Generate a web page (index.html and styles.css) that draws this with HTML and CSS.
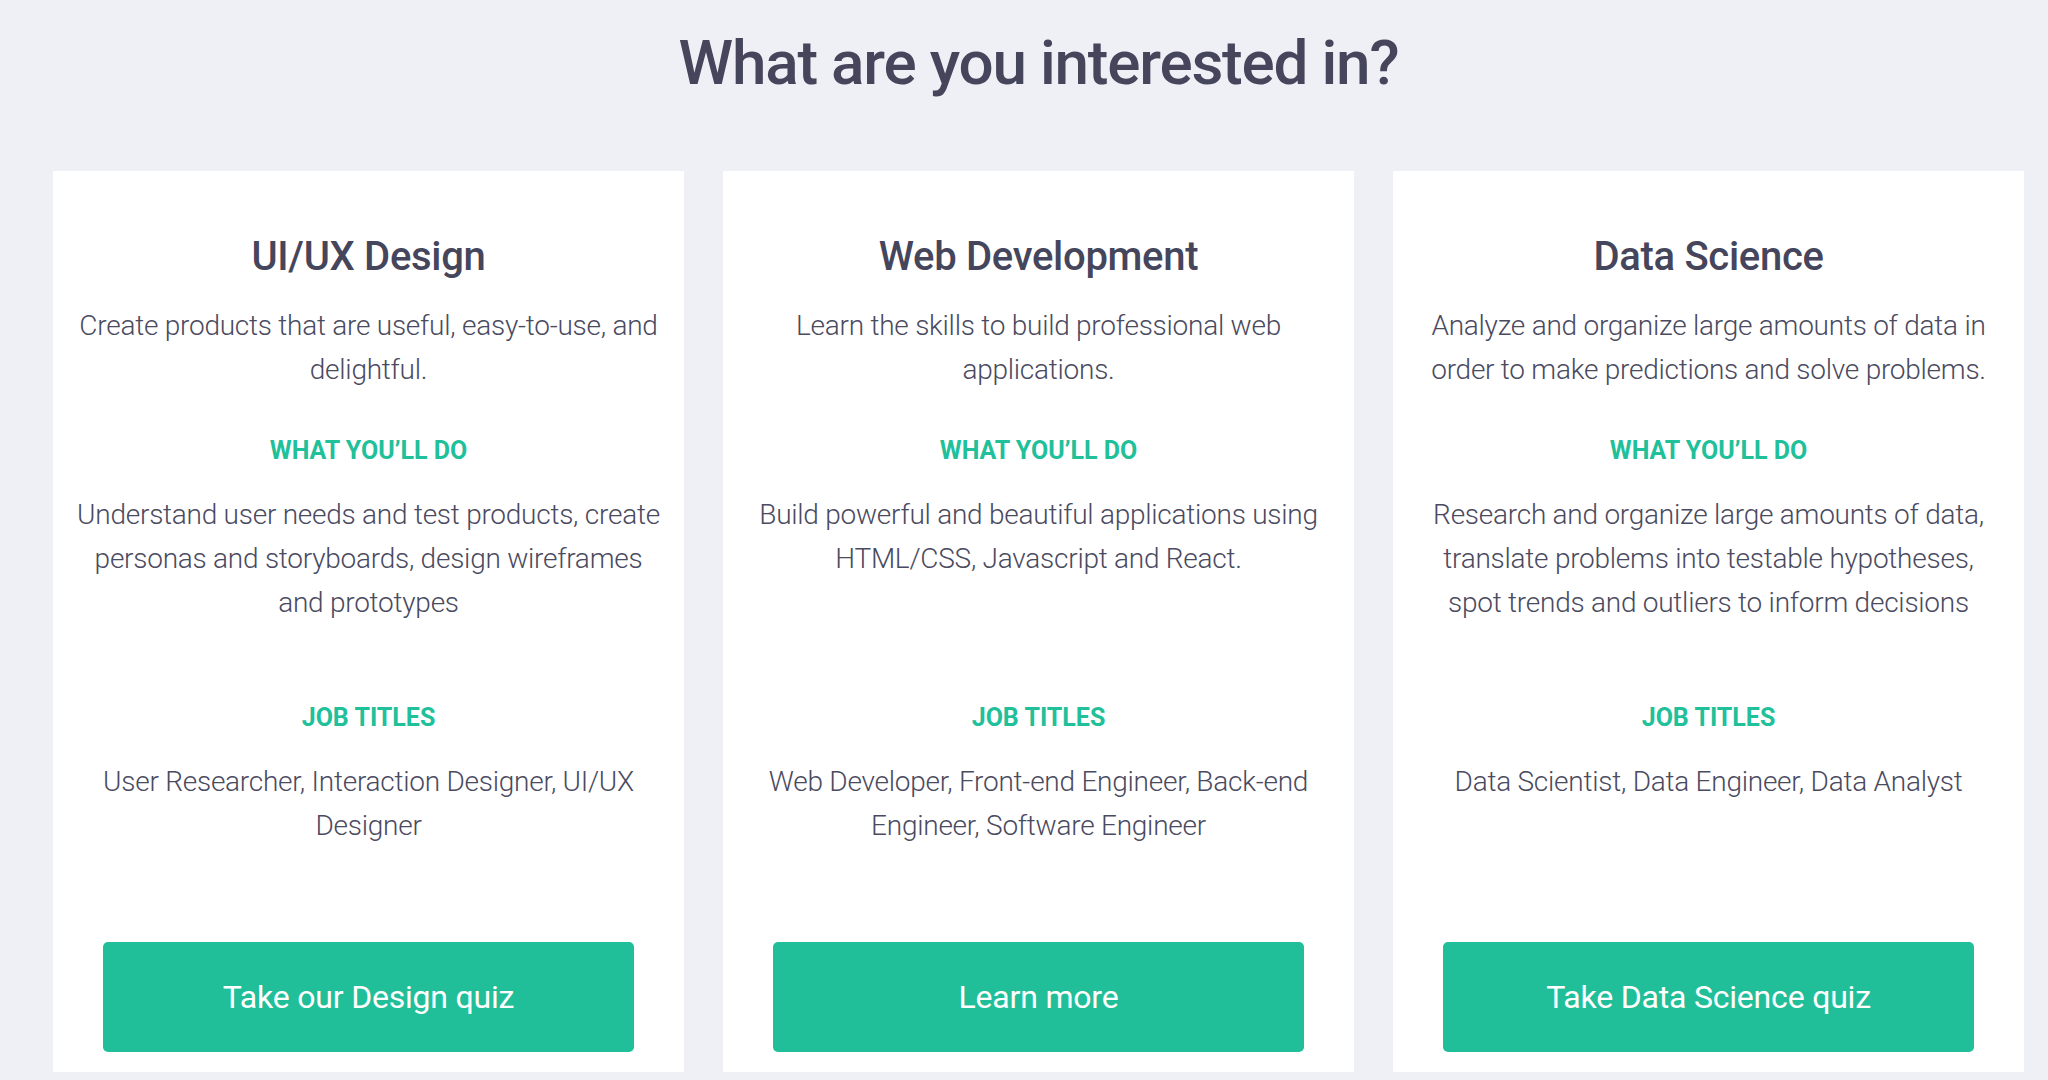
FILE: index.html
```html
<!DOCTYPE html>
<html lang="en">
<head>
<meta charset="utf-8">
<title>What are you interested in?</title>
<link rel="stylesheet" href="styles.css">
</head>
<body>
<main class="page">
  <h1 class="page-title">What are you interested in?</h1>
  <div class="cards">
    <section class="card">
      <h2 class="card-title">UI/UX Design</h2>
      <p class="desc">Create products that are useful, easy-to-use, and delightful.</p>
      <h3 class="label">WHAT YOU’LL DO</h3>
      <p class="body">Understand user needs and test products, create personas and storyboards, design wireframes and prototypes</p>
      <h3 class="label">JOB TITLES</h3>
      <p class="jobs">User Researcher, Interaction Designer, UI/UX Designer</p>
      <a class="btn" href="#">Take our Design quiz</a>
    </section>
    <section class="card">
      <h2 class="card-title">Web Development</h2>
      <p class="desc">Learn the skills to build professional web applications.</p>
      <h3 class="label">WHAT YOU’LL DO</h3>
      <p class="body">Build powerful and beautiful applications using HTML/CSS, Javascript and React.</p>
      <h3 class="label">JOB TITLES</h3>
      <p class="jobs">Web Developer, Front-end Engineer, Back-end Engineer, Software Engineer</p>
      <a class="btn" href="#">Learn more</a>
    </section>
    <section class="card">
      <h2 class="card-title">Data Science</h2>
      <p class="desc">Analyze and organize large amounts of data in order to make predictions and solve problems.</p>
      <h3 class="label">WHAT YOU’LL DO</h3>
      <p class="body">Research and organize large amounts of data, translate problems into testable hypotheses, spot trends and outliers to inform decisions</p>
      <h3 class="label">JOB TITLES</h3>
      <p class="jobs">Data Scientist, Data Engineer, Data Analyst</p>
      <a class="btn" href="#">Take Data Science quiz</a>
    </section>
  </div>
</main>
</body>
</html>
```

FILE: styles.css
```css
* { box-sizing: border-box; }

html, body {
  margin: 0;
  padding: 0;
  background: #eff0f5;
}

body {
  font-family: Roboto, "Liberation Sans", sans-serif;
  color: #45455c;
}

.page {
  padding: 27px 24px 0 53px;
}

.page-title {
  margin: 0 0 72px;
  font-size: 62px;
  line-height: 72px;
  font-weight: 500;
  letter-spacing: -1.2px;
  text-align: center;
  color: #45455c;
}

.cards {
  display: flex;
  gap: 39px;
}

.card {
  flex: 0 0 631px;
  display: flex;
  flex-direction: column;
  background: #ffffff;
  padding: 62px 21.5px 20px;
  text-align: center;
}

.card-title {
  margin: 0 0 23px;
  font-size: 40px;
  line-height: 48px;
  font-weight: 500;
  letter-spacing: -0.3px;
  color: #45455c;
}

.desc,
.body,
.jobs {
  margin: 0;
  font-size: 28px;
  line-height: 44px;
  font-weight: 300;
  letter-spacing: -0.25px;
  color: #4a4a60;
}

.desc {
  min-height: 88px;
  margin-bottom: 44px;
}

.label {
  margin: 0 0 27px;
  font-size: 25px;
  line-height: 30px;
  font-weight: 700;
  color: #20c09a;
}

.body {
  min-height: 166px;
  margin-bottom: 44px;
}

.jobs {
  min-height: 88px;
  margin-bottom: 94px;
}

.btn {
  display: flex;
  align-items: center;
  justify-content: center;
  height: 110px;
  margin: 0 28.5px;
  background: #21bf99;
  border-radius: 5px;
  color: #ffffff;
  font-size: 32px;
  font-weight: 400;
  letter-spacing: -0.2px;
  text-decoration: none;
}
```
